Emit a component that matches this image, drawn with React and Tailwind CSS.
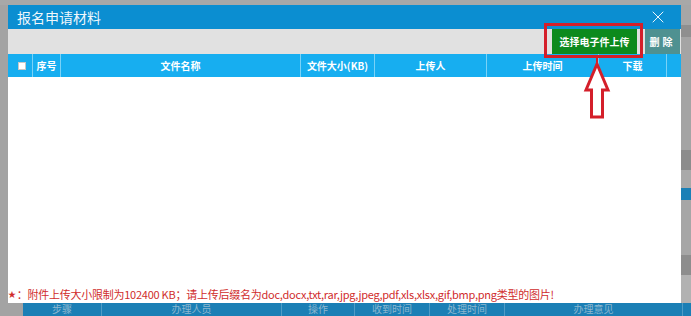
import { X } from "lucide-react";

const headCols = [
  { label: "序号", cls: "w-[28px]" },
  { label: "文件名称", cls: "w-[240px]" },
  { label: "文件大小(KB)", cls: "w-[74px]" },
  { label: "上传人", cls: "w-[112px]" },
  { label: "上传时间", cls: "w-[112px]" },
  { label: "下载", cls: "w-[68px]" },
];

const backCols = [
  { label: "步骤", cls: "w-[79px]" },
  { label: "办理人员", cls: "w-[180px]" },
  { label: "操作", cls: "w-[73px]" },
  { label: "收到时间", cls: "w-[75px]" },
  { label: "处理时间", cls: "w-[75px]" },
  { label: "办理意见", cls: "w-[178px]" },
];

const App = () => {
  return (
    <div className="relative w-[691px] h-[316px] overflow-hidden bg-[#a8a8a8] flex flex-col font-['Noto_Sans_CJK_SC','Microsoft_YaHei',sans-serif]">
      <div className="flex h-[303px] pt-[5px]">
        <div className="w-[8px] bg-[#a3a3a3]" />

        {/* dialog */}
        <div className="relative w-[673px] flex flex-col bg-white">
          <div className="h-[24px] bg-[#0b8ed1] flex items-center justify-between pl-[9px] pr-[13px]">
            <span className="text-[14px] leading-none text-white/95">报名申请材料</span>
            <X size={20} strokeWidth={1.1} className="text-white" />
          </div>

          <div className="h-[25px] bg-[#e1e1e1] flex justify-end pr-[1px]">
            <div className="relative w-[85px] bg-[#0d8a1d] flex items-center justify-center">
              <span className="text-[10px] font-bold text-white">选择电子件上传</span>
              <div className="absolute -left-[8px] -top-[6px] w-[99px] h-[35px] border-[3px] border-[#d41f2a]" />
            </div>
            <div className="ml-[8px] w-[35px] bg-[#4f9191] flex items-center justify-center">
              <span className="text-[10px] font-bold text-white tracking-[3px]">删除</span>
            </div>
          </div>

          {/* table header */}
          <div className="h-[23px] bg-[#17aef0] flex text-[10px] font-bold text-white">
            <div className="w-[25px] flex items-center justify-center border-r border-[#7ad2f7]">
              <div className="w-[8px] h-[8px] bg-white border border-[#c8c8c8] ml-[4px]" />
            </div>
            {headCols.map((c) => (
              <div
                key={c.label}
                className={`${c.cls} flex items-center justify-center border-r border-[#7ad2f7]`}
              >
                {c.label}
              </div>
            ))}
          </div>

          <div className="flex-1" />

          <div className="h-[16px] pb-[2px] flex items-center whitespace-nowrap text-[11px] text-[#d02c2c] tracking-[-0.25px]">
            <span className="text-[8px] mr-[1px]">★</span>：附件上传大小限制为102400 KB；请上传后缀名为doc,docx,txt,rar,jpg,jpeg,pdf,xls,xlsx,gif,bmp,png类型的图片!
          </div>
        </div>

        {/* page behind, right edge */}
        <div className="w-[10px] flex flex-col">
          <div className="h-[20px] bg-[#a6a6a6]" />
          <div className="h-[12px] bg-[#8f8f8f]" />
          <div className="h-[113px] bg-[#a4a4a4]" />
          <div className="h-[20px] bg-[#8c8c8c]" />
          <div className="h-[18px] bg-[#a9a9a9]" />
          <div className="h-[12px] bg-[#1b80b6]" />
          <div className="h-[55px] bg-[#a6a6a6]" />
          <div className="h-[20px] bg-[#8d8d8d]" />
          <div className="flex-1 bg-[#b2b2b2]" />
        </div>
      </div>

      {/* page behind, bottom table header */}
      <div className="flex h-[13px]">
        <div className="w-[23px] bg-[#a3a3a3]" />
        <div className="flex-1 bg-[#1b7fb5] flex text-[10px] leading-[12px] text-[#8db7cf]">
          {backCols.map((c) => (
            <div
              key={c.label}
              className={`${c.cls} flex justify-center border-r border-[#4f9cc6]`}
            >
              {c.label}
            </div>
          ))}
        </div>
      </div>

      {/* hint arrow */}
      <svg
        className="absolute left-[580px] top-[56px]"
        width="36"
        height="66"
        viewBox="0 0 36 66"
      >
        <line x1="17" y1="2" x2="17" y2="8" stroke="#d41f2a" strokeWidth="2" />
        <polygon
          points="17,8 6,34 11.5,34 11.5,61 22.5,61 22.5,34 28,34"
          fill="white"
          stroke="#d41f2a"
          strokeWidth="3"
          strokeLinejoin="miter"
        />
      </svg>
    </div>
  );
};

export default App;
